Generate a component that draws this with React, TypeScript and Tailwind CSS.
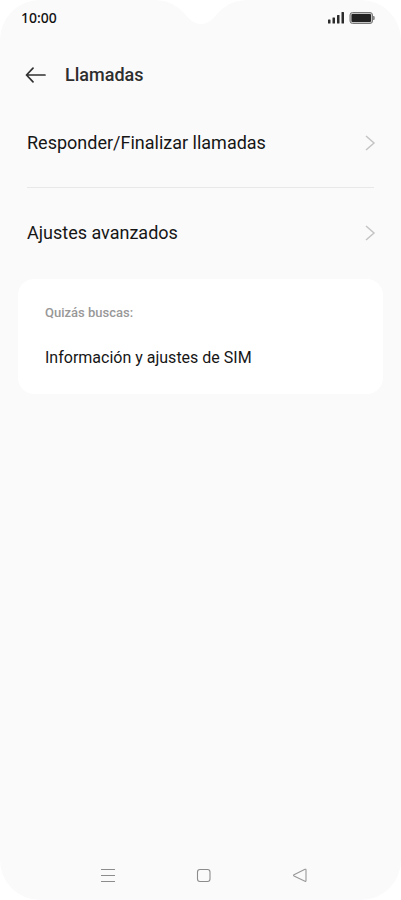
import React from "react";

const rows = ["Responder/Finalizar llamadas", "Ajustes avanzados"];

const StatusBar = () => {
  return (
    <div className="relative h-9 flex justify-between items-center pl-[21px] pr-[26px]">
      <span className="font-['Noto_Sans',sans-serif] text-sm font-medium text-[#111111]">10:00</span>
      <svg
        className="absolute top-0 left-1/2 -translate-x-1/2"
        width="92"
        height="24"
        viewBox="0 0 92 24"
        fill="#ffffff"
      >
        <path d="M0 0C15 1 21 5 29 13C35 20 39 24 46 24C53 24 57 20 63 13C71 5 77 1 92 0Z" />
      </svg>
      <div className="flex items-center gap-1">
        <svg width="18" height="12" viewBox="0 0 18 12" fill="#2b2b2b">
          <rect x="1" y="7.5" width="2.5" height="4" rx="0.5" />
          <rect x="5.5" y="5.5" width="2.5" height="6" rx="0.5" />
          <rect x="10" y="3" width="2.5" height="8.5" rx="0.5" />
          <rect x="14.5" y="0" width="2.5" height="11.5" rx="0.5" />
        </svg>
        <svg width="26" height="12" viewBox="0 0 26 12">
          <rect x="1" y="0.5" width="22.5" height="11" rx="2.5" fill="#c4c4c4" stroke="#777777" />
          <rect x="2.5" y="2" width="19.5" height="8" rx="1" fill="#222222" />
          <path d="M24.5 4C25.5 4 25.5 8 24.5 8Z" fill="#888888" stroke="#888888" />
        </svg>
      </div>
    </div>
  );
};

const Row = ({label}: {label: string}) => {
  return (
    <button className="h-[89px] w-full flex justify-between items-center text-left">
      <span className="text-lg text-[#161616]">{label}</span>
      <svg
        className="overflow-visible"
        width="10"
        height="16"
        viewBox="0 0 10 16"
        fill="none"
        stroke="#c4c4c4"
        strokeWidth="1.5"
      >
        <path d="M2 1L10 8L2 15" />
      </svg>
    </button>
  );
};

const NavBar = () => {
  return (
    <nav className="mt-auto h-[50px] flex justify-center items-center gap-20 pl-1.5">
      <button aria-label="Recientes">
        <svg width="16" height="16" viewBox="0 0 16 16" stroke="#8c8c8c" strokeWidth="1.1">
          <path d="M1 2.5H15M1 8.5H15M1 14.5H15" />
        </svg>
      </button>
      <button aria-label="Inicio">
        <svg width="16" height="16" viewBox="0 0 16 16" fill="none" stroke="#8c8c8c" strokeWidth="1.1">
          <rect x="1.5" y="2.5" width="12.5" height="12" rx="2.5" />
        </svg>
      </button>
      <button aria-label="Atrás">
        <svg width="16" height="16" viewBox="0 0 16 16" fill="none" stroke="#999999" strokeWidth="1.1">
          <path d="M13 2.3L2 7.7Q1 8.3 2 9L13 14.3Q14 14.7 14 13.6V3Q14 1.9 13 2.3Z" />
        </svg>
      </button>
    </nav>
  );
};

const App = () => {
  return (
    <div className="bg-white font-[Roboto,sans-serif]">
      <div className="min-h-screen flex flex-col bg-[#fafafa] rounded-[40px]">
        <StatusBar />
        <header className="mt-[15px] h-12 flex items-center gap-[18px] pl-[25px]">
          <button aria-label="Volver">
            <svg
              width="22"
              height="16"
              viewBox="0 0 22 16"
              fill="none"
              stroke="#303030"
              strokeWidth="1.7"
              strokeLinecap="round"
              strokeLinejoin="round"
            >
              <path d="M8 1.2L1.5 8L8 14.8M1.5 8H20" />
            </svg>
          </button>
          <h1 className="text-lg font-medium text-[#2e2e2e]">Llamadas</h1>
        </header>
        <main>
          <div className="px-[27px] divide-y divide-[#e8e8e8]">
            {rows.map((label) => (
              <Row key={label} label={label} />
            ))}
          </div>
          <section className="mt-[2px] mx-[18px] h-fit rounded-2xl bg-white px-[27px] py-6">
            <h2 className="text-[13px] leading-5 font-medium text-[#989898]">Quizás buscas:</h2>
            <a href="#" className="mt-[23px] block text-base text-[#161616]">
              Información y ajustes de SIM
            </a>
          </section>
        </main>
        <NavBar />
      </div>
    </div>
  );
};

export default App;
